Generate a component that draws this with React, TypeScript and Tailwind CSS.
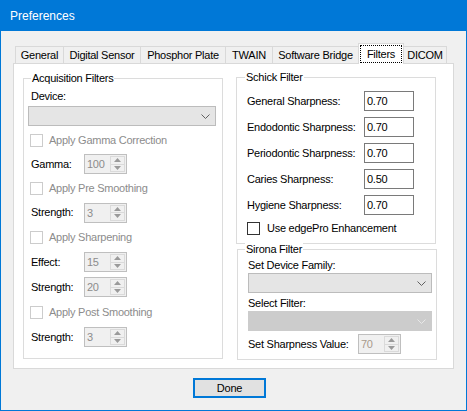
import React from "react";

const font = "font-['Liberation_Sans',Arial,sans-serif]";

function Chevron({ color = "#606060" }: { color?: string }) {
  return (
    <svg width="9" height="5" viewBox="0 0 9 5">
      <polyline points="0.5,0.5 4.5,4.5 8.5,0.5" fill="none" stroke={color} strokeWidth="1" />
    </svg>
  );
}

function Combo({ className = "", dark = false }: { className?: string; dark?: boolean }) {
  return (
    <div
      className={`flex h-[20px] items-center justify-end border pr-[5px] ${
        dark ? "border-[#cccccc] bg-[#cccccc]" : "border-[#bcbcbc] bg-[#e5e5e5]"
      } ${className}`}
    >
      <Chevron color={dark ? "#e8e8e8" : "#606060"} />
    </div>
  );
}

function Spinner({ value, tint = "#8c8c8c" }: { value: string; tint?: string }) {
  return (
    <div className="flex h-[20px] w-[43px] border border-[#bfbfbf] bg-[#f0f0f0]">
      <div className="flex-1 pl-[2px] leading-[18px]" style={{ color: tint }}>
        {value}
      </div>
      <div className="my-[1px] mr-[1px] flex w-[15px] flex-col border border-[#dadada]">
        <div className="flex flex-1 items-center justify-center border-b border-[#dadada]">
          <svg width="7" height="4" viewBox="0 0 7 4">
            <polygon points="0,4 3.5,0 7,4" fill="#9a9a9a" />
          </svg>
        </div>
        <div className="flex flex-1 items-center justify-center">
          <svg width="7" height="4" viewBox="0 0 7 4">
            <polygon points="0,0 3.5,4 7,0" fill="#9a9a9a" />
          </svg>
        </div>
      </div>
    </div>
  );
}

function DisabledCheck({ label, h }: { label: string; h: string }) {
  return (
    <div className={`flex items-center gap-[6px] pl-[6px] ${h}`}>
      <div className="h-[13px] w-[13px] border border-[#cccccc] bg-white" />
      <span className="text-[#8c8c8c]">{label}</span>
    </div>
  );
}

function SpinRow({ label, value, h }: { label: string; value: string; h: string }) {
  return (
    <div className={`flex items-center pl-[7px] ${h}`}>
      <span className="w-[53px]">{label}</span>
      <Spinner value={value} />
    </div>
  );
}

function SharpRow({ label, value }: { label: string; value: string }) {
  return (
    <div className="flex h-[26px] items-center pl-[10px]">
      <span className="w-[117px]">{label}</span>
      <div className="h-[20px] w-[50px] border border-[#7a7a7a] bg-white pl-[2px] leading-[18px]">{value}</div>
    </div>
  );
}

function Legend({ text, ml }: { text: string; ml: string }) {
  return <div className={`-mt-[7px] w-fit bg-white px-[1px] leading-[13px] ${ml}`}>{text}</div>;
}

const tabs = [
  { name: "General", w: "w-[48px]", cls: "border-l" },
  { name: "Digital Sensor", w: "w-[77px]", cls: "border-l" },
  { name: "Phosphor Plate", w: "w-[85px]", cls: "border-l" },
  { name: "TWAIN", w: "w-[47px]", cls: "border-l" },
  { name: "Software Bridge", w: "w-[86px]", cls: "border-l" },
];

export default function App() {
  return (
    <div
      className={`${font} flex h-[411px] w-[467px] flex-col border-x border-b border-[#0078d7] bg-[#f0f0f0] text-[11px] tracking-[-0.25px] text-black`}
    >
      <div className="flex h-[31px] shrink-0 items-center bg-[#0078d7] pl-[9px] text-[12px] tracking-normal text-white">
        Preferences
      </div>

      <div className="flex flex-col pl-[12px] pt-[12px]">
        {/* tab strip */}
        <div className="flex h-[20px] items-end pl-[2px]">
          {tabs.map((t) => (
            <div
              key={t.name}
              className={`flex h-[17px] items-center justify-center border-t border-[#d9d9d9] bg-[#f0f0f0] pt-[1px] ${t.cls} ${t.w}`}
            >
              {t.name}
            </div>
          ))}
          <div className="relative z-10 -mb-px flex h-[21px] w-[46px] border-x border-t border-[#d9d9d9] bg-white p-[1px]">
            <div className="flex flex-1 items-center justify-center border border-dotted border-black">Filters</div>
          </div>
          <div className="flex h-[17px] w-[43px] items-center justify-center border-r border-t border-[#d9d9d9] bg-[#f0f0f0] pt-[1px]">
            DICOM
          </div>
        </div>

        {/* panel */}
        <div className="flex h-[306px] w-[441px] items-start gap-[13px] border border-[#d9d9d9] bg-white pl-[9px] pt-[14px]">
          {/* Acquisition Filters */}
          <div className="flex h-[281px] w-[200px] flex-col border border-[#dcdcdc]">
            <Legend text="Acquisition Filters" ml="ml-[7px]" />
            <div className="mt-[3px] flex h-[16px] items-center pl-[7px]">Device:</div>
            <Combo className="ml-[4px] mt-[2px] w-[188px]" />
            <div className="mt-[2px] flex flex-col">
              <DisabledCheck label="Apply Gamma Correction" h="h-[24px]" />
              <SpinRow label="Gamma:" value="100" h="h-[24px]" />
              <DisabledCheck label="Apply Pre Smoothing" h="h-[24px]" />
              <SpinRow label="Strength:" value="3" h="h-[25px]" />
              <DisabledCheck label="Apply Sharpening" h="h-[25px]" />
              <SpinRow label="Effect:" value="15" h="h-[24px]" />
              <SpinRow label="Strength:" value="20" h="h-[26px]" />
              <DisabledCheck label="Apply Post Smoothing" h="h-[25px]" />
              <SpinRow label="Strength:" value="3" h="h-[24px]" />
            </div>
          </div>

          <div className="flex flex-col">
            {/* Schick Filter */}
            <div className="-mt-px flex h-[167px] w-[200px] flex-col border border-[#dcdcdc]">
              <Legend text="Schick Filter" ml="ml-[8px]" />
              <div className="mt-[4px] flex flex-col">
                <SharpRow label="General Sharpness:" value="0.70" />
                <SharpRow label="Endodontic Sharpness:" value="0.70" />
                <SharpRow label="Periodontic Sharpness:" value="0.70" />
                <SharpRow label="Caries Sharpness:" value="0.50" />
                <SharpRow label="Hygiene Sharpness:" value="0.70" />
                <div className="flex h-[20px] items-center gap-[7px] pl-[10px]">
                  <div className="h-[13px] w-[13px] border border-[#333333] bg-white" />
                  <span>Use edgePro Enhancement</span>
                </div>
              </div>
            </div>

            {/* Sirona Filter */}
            <div className="ml-px mt-[5px] flex h-[111px] w-[200px] flex-col border border-[#dcdcdc]">
              <Legend text="Sirona Filter" ml="ml-[7px]" />
              <div className="mt-[1px] flex h-[16px] items-center pl-[10px]">Set Device Family:</div>
              <Combo className="ml-[10px] w-[184px]" />
              <div className="mt-[2px] flex h-[16px] items-center pl-[10px]">Select Filter:</div>
              <Combo className="ml-[10px] w-[184px]" dark />
              <div className="mt-[3px] flex h-[20px] items-center pl-[10px]">
                <span className="w-[110px]">Set Sharpness Value:</span>
                <Spinner value="70" tint="#a89a8c" />
              </div>
            </div>
          </div>
        </div>

        {/* Done */}
        <div className="ml-[180px] mt-[9px] flex h-[20px] w-[73px] items-center justify-center border-2 border-[#0078d7] bg-[#e1e1e1]">
          Done
        </div>
      </div>
    </div>
  );
}
